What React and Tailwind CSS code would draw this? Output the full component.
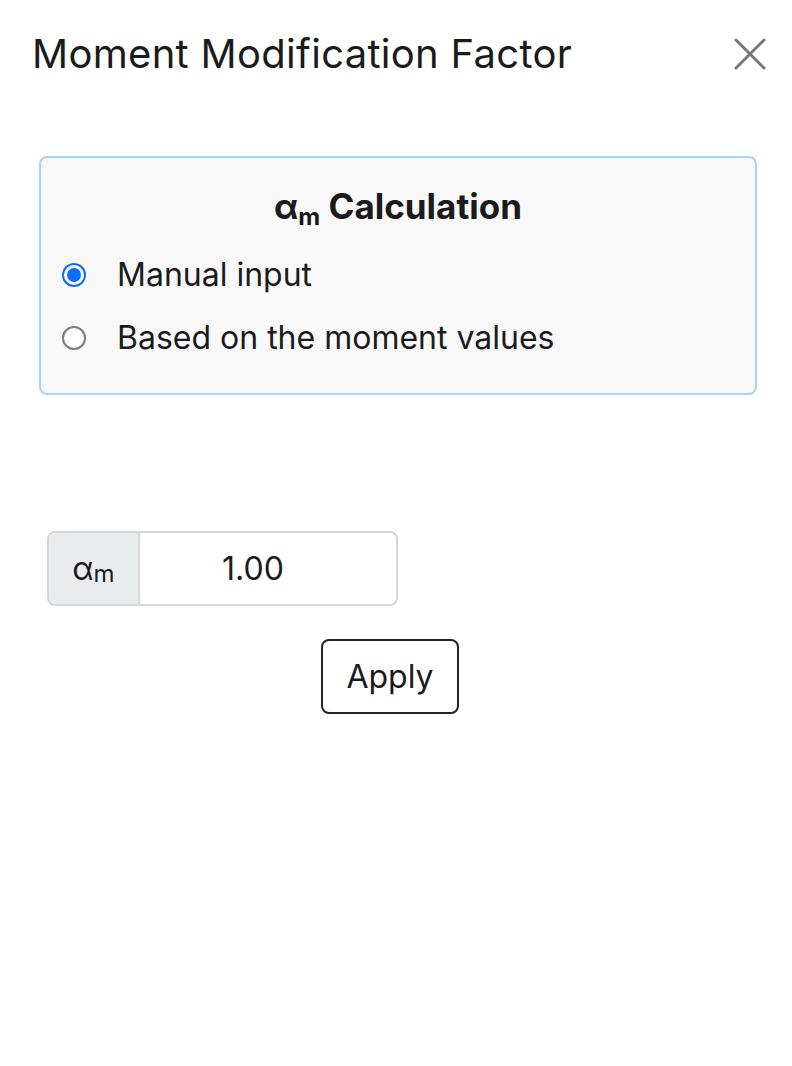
import React, { useState } from "react";

const Radio = ({ checked, label, onClick }) => (
  <label onClick={onClick} className="flex items-center gap-[31px] cursor-pointer leading-[40px]">
    {checked ? (
      <span className="w-[24px] h-[24px] rounded-full bg-[#0d6efd] flex items-center justify-center">
        <span className="w-[14px] h-[14px] rounded-full bg-[#0d6efd] ring-[3px] ring-white" />
      </span>
    ) : (
      <span className="w-[24px] h-[24px] rounded-full border-[2px] border-[#7a7a7a] bg-white" />
    )}
    <span className="text-[32px] text-[#1b1b1b]">{label}</span>
  </label>
);

export default function App() {
  const [mode, setMode] = useState("manual");

  return (
    <div className="w-[792px] h-[1066px] bg-white font-['Inter',sans-serif] text-[#1b1b1b]">
      {/* Header */}
      <div className="flex items-center justify-between pl-[32px] pr-[26px] pt-[30px]">
        <h1 className="text-[40px] leading-[48px] tracking-[0.3px]">Moment Modification Factor</h1>
        <svg width="32" height="32" viewBox="0 0 32 32" className="text-[#777]">
          <path d="M2 2 L30 30 M30 2 L2 30" stroke="currentColor" strokeWidth="3" strokeLinecap="round" />
        </svg>
      </div>

      {/* Calculation mode */}
      <div className="ml-[39px] mr-[35px] mt-[78px] border-[2px] border-[#a6d4f8] rounded-[8px] bg-[#f8f8f8] px-[21px] pt-[26px] pb-[35px]">
        <h2 className="text-center text-[35px] font-bold leading-[44px]">
          α<sub className="text-[24px]">m</sub> Calculation
        </h2>
        <div className="flex flex-col gap-[23px] mt-[27px]">
          <Radio checked={mode === "manual"} label="Manual input" onClick={() => setMode("manual")} />
          <Radio checked={mode === "moment"} label="Based on the moment values" onClick={() => setMode("moment")} />
        </div>
      </div>

      {/* Input */}
      <div className="ml-[47px] mt-[136px] flex w-[351px] h-[75px] border-[2px] border-[#d3d6da] rounded-[8px] overflow-hidden">
        <div className="w-[91px] bg-[#e9ecef] border-r-[2px] border-[#d3d6da] flex items-center justify-center text-[32px]">
          α<span className="text-[24px] mt-[10px]">m</span>
        </div>
        <div className="flex-1 flex items-center justify-center pr-[30px] text-[32px]">1.00</div>
      </div>

      <div className="flex justify-center pr-[12px] mt-[33px]">
        <button className="w-[138px] h-[75px] border-[2px] border-[#212529] rounded-[8px] text-[32px] bg-white">
          Apply
        </button>
      </div>
    </div>
  );
}
